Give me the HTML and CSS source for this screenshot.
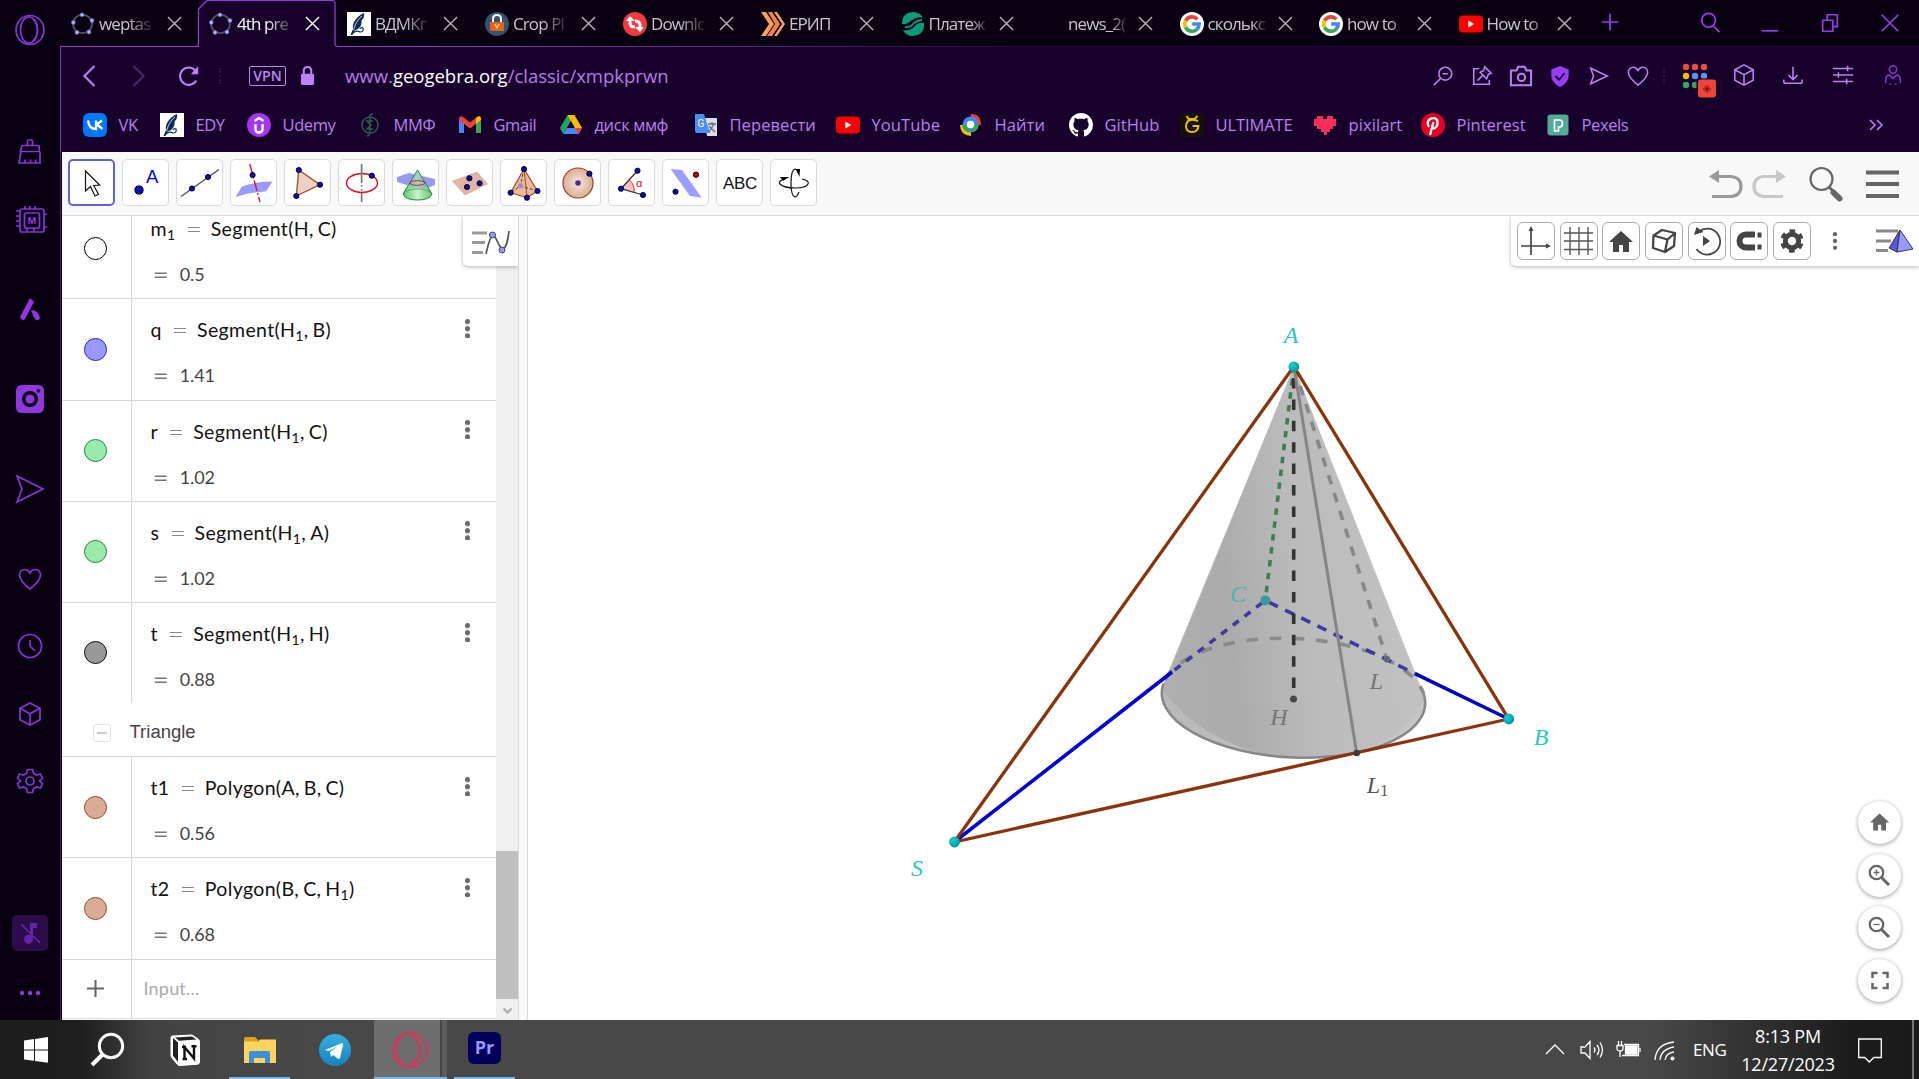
FILE: index.html
```html
<!DOCTYPE html>
<html lang="en">
<head>
<meta charset="utf-8">
<title>4th pre</title>
<link rel="stylesheet" href="styles.css">
</head>
<body>
<svg class="defs" width="0" height="0">
  <defs>
    <g id="x"><path d="M1 1L15 15M15 1L1 15"/></g>
    <g id="ggb"><ellipse cx="11.500" cy="12" rx="9.500" ry="9.200" fill="none" stroke="#504f56" stroke-width="2"/><g fill="#b0aef5" stroke="#7775cc" stroke-width=".5"><circle cx="11" cy="2.800" r="1.900"/><circle cx="21" cy="8.500" r="1.900"/><circle cx="18" cy="20" r="1.900"/><circle cx="6" cy="20.500" r="1.900"/><circle cx="2.300" cy="10.500" r="1.900"/></g></g>
    <g id="feather"><path fill="#fff" d="M0 0h24v24H0z"/><path fill="#0c2b57" d="M17 1C9 5 5 11 6 17L3.500 23h2l2-4.500C13 17 15 13 14.500 8.500 17 6 17.500 4 17 1z"/><path stroke="#fff" stroke-width=".8" fill="none" d="M15 4c-5 4-7 9-8.500 14"/><path stroke="#0c2b57" stroke-width="1.200" fill="none" d="M6 21q3-3 7-1 4 0 3-4-2-1-3 1"/></g>
    <g id="google"><circle cx="12" cy="12" r="12" fill="#fff"/><g fill="none" stroke-width="3.600"><path stroke="#ea4335" d="M17.400 7.200A7.300 7.300 0 0 0 5.600 8.700"/><path stroke="#fbbc05" d="M5.600 8.600a7.300 7.300 0 0 0 0 6.800"/><path stroke="#34a853" d="M5.600 15.300a7.300 7.300 0 0 0 11.500 1.900"/><path stroke="#4285f4" d="M12.200 12h6.900a7 7 0 0 1-2.200 5.300"/></g></g>
    <g id="yt"><rect x="0" y="3.500" width="24" height="17" rx="4" fill="#f00"/><path fill="#fff" d="M9.300 8.600v6.800l6-3.400z"/></g>
    <g id="cube"><path d="M12 1l10 5.300v11.400L12 23 2 17.700V6.300zM2 6.300l10 5.400 10-5.400M12 11.700V23"/></g>
    <g id="heart"><path d="M12 22C7 18 1.500 13.500 1.500 8.200 1.500 4.500 4 2.500 6.800 2.500 9.300 2.500 11 4 12 6c1-2 2.700-3.500 5.200-3.500 2.800 0 5.300 2 5.300 5.700C22.500 13.500 17 18 12 22z"/></g>
    <g id="home"><path d="M12 2L0 13h4v10h6v-7h4v7h6V13h4z"/></g>
    <g id="d" fill="#0a0abf" stroke="#000" stroke-width=".9"><circle r="2.600"/></g>
    <linearGradient id="cone" x1="1165" x2="1425" y1="650" y2="620" gradientUnits="userSpaceOnUse"><stop offset="0" stop-color="#adadad"/><stop offset=".25" stop-color="#a8a8a8"/><stop offset=".55" stop-color="#bababa"/><stop offset="1" stop-color="#c2c2c2"/></linearGradient>
    <linearGradient id="base" x1="1165" x2="1425" y1="0" y2="0" gradientUnits="userSpaceOnUse"><stop offset="0" stop-color="#b8b8b8"/><stop offset=".4" stop-color="#c0c0c0"/><stop offset="1" stop-color="#c6c6c6"/></linearGradient>
    <radialGradient id="pt" cx=".35" cy=".35" r=".7"><stop offset="0" stop-color="#0fd0d0"/><stop offset="1" stop-color="#009a9a"/></radialGradient>
    <radialGradient id="sph"><stop offset="0" stop-color="#f8e6de"/><stop offset="1" stop-color="#dcae96"/></radialGradient>
    <linearGradient id="grn"><stop offset="0" stop-color="#5fc46a"/><stop offset=".5" stop-color="#c9f2cc"/><stop offset="1" stop-color="#62c96c"/></linearGradient>
    <linearGradient id="tg" x2="0" y2="1"><stop offset="0" stop-color="#37aee2"/><stop offset="1" stop-color="#1583bd"/></linearGradient>
  </defs>
</svg>
<div class="screen">
<div class="window">
<nav class="side">
  <svg viewBox="0 0 36 36"><g><ellipse cx="18" cy="18" rx="14" ry="14.500"/><ellipse cx="17" cy="18" rx="8.500" ry="13"/><path d="M21 7c6 5 6 17 0 22"/></g></svg>
  <div class="g1">
    <svg viewBox="0 0 36 36"><path d="M15.500 11.500V7q0-1 1-1h3q1 0 1 1v4.500M8.500 17.500l1-5q.300-1 1.300-1h15.400q1 0 1 1v5zM9 17.500L7 29h21v-11.500M13 29v-3.500M18.500 29v-3.500M23.500 29v-3.500"/></svg>
    <svg viewBox="0 0 36 36"><rect x="8" y="7" width="24" height="23" rx="2"/><rect x="12.500" y="11" width="15" height="15" rx="2"/><path d="M13 7V4M18 7V4M23 7V4M8 9H4M8 14H4M8 19H4M8 24H4M35 12h-3M35 25h-3M15 26v4M22 26v4"/><text x="20" y="22" class="chip">M</text></svg>
  </div>
  <div class="g2">
    <svg viewBox="0 0 36 36"><path class="f" d="M18 7l4 4-9 17q-3 3-5-2zM19 19q7 0 9 8-2 4-5 1-2-3-4-9z"/></svg>
    <svg viewBox="0 0 36 36"><path class="f" fill-rule="evenodd" d="M10 4h16q6 0 6 6v16q0 6-6 6H10q-6 0-6-6V10q0-6 6-6zm8 6a8 8 0 1 0 .01 0zm0 3.500a4.500 4.500 0 1 1-.01 0zM26.500 8a1.800 1.800 0 1 0 .01 0z"/></svg>
    <svg viewBox="0 0 36 36"><path d="M5 5l26 13L5 31l5-13z"/></svg>
  </div>
  <div class="g3">
    <svg viewBox="-6 -6 36 36"><use href="#heart"/></svg>
    <svg viewBox="0 0 36 36"><circle cx="18" cy="18" r="11.500"/><path d="M18 12v6l5 5"/></svg>
    <svg viewBox="-6 -6 36 36"><use href="#cube"/></svg>
    <svg viewBox="0 0 36 36"><circle cx="18" cy="18" r="4"/><path d="M15.500 6.500h5l1 4 3 1.500 4-1 2 4.300-3 2.700 3 2.700-2 4.300-4-1-3 1.500-1 4h-5l-1-4-3-1.500-4 1-2-4.300 3-2.700-3-2.700 2-4.300 4 1 3-1.500z"/></svg>
  </div>
  <svg class="mute" viewBox="0 0 36 36"><path class="f" d="M18 8h7v5h-4v11a4.500 4.500 0 1 1-3-4z"/><path d="M9 9l19 19"/></svg>
  <svg class="more" viewBox="0 0 36 36"><g class="f"><circle cx="10" cy="18" r="2.200"/><circle cx="18" cy="18" r="2.200"/><circle cx="26" cy="18" r="2.200"/></g></svg>
</nav>
<div class="main">
<header class="tabs">
  <div class="tab"><svg viewBox="0 0 24 24"><use href="#ggb"/></svg><span>weptas</span><svg class="cl" viewBox="0 0 16 16"><use href="#x"/></svg></div>
  <div class="tab on"><svg class="edge" viewBox="0 0 138 48"><path d="M-138 46.500H-3Q-.500 46.500-.500 43V9L8 .5H133q3 0 3 3V43q0 3.500 3 3.500"/></svg><svg viewBox="0 0 24 24"><use href="#ggb"/></svg><span>4th pre</span><svg class="cl" viewBox="0 0 16 16"><use href="#x"/></svg></div>
  <div class="tab"><svg viewBox="0 0 24 24"><use href="#feather"/></svg><span>ВДМКг</span><svg class="cl" viewBox="0 0 16 16"><use href="#x"/></svg></div>
  <div class="tab"><svg viewBox="0 0 24 24"><circle cx="12" cy="12" r="12" fill="#35536b"/><path d="M8 11V7q0-4 4-4t4 4v4" stroke="#fff" stroke-width="2" fill="none"/><rect x="5" y="10" width="14" height="9" rx="1" fill="#e5612b"/><path d="M10 12l2 4 2-4" stroke="#ffd23c" stroke-width="1.500" fill="none"/></svg><span>Crop Pl</span><svg class="cl" viewBox="0 0 16 16"><use href="#x"/></svg></div>
  <div class="tab"><svg viewBox="0 0 24 24"><circle cx="12" cy="12" r="12" fill="#f23a3f"/><g fill="none" stroke="#fff" stroke-width="3"><path d="M7 8v3q0 4 5 4M17 16v-3q0-4-5-4"/></g><path fill="#fff" d="M3 9l4-5 5 5zM21 15l-4 5-5-5z"/></svg><span>Downlc</span><svg class="cl" viewBox="0 0 16 16"><use href="#x"/></svg></div>
  <div class="tab w1"><svg viewBox="0 0 24 24"><path d="M0 0h5l8 12-8 12H0l8-12z" fill="#f6a060"/><path d="M7 0h4l8 12-8 12H6l8-12z" fill="#f2834e"/><path d="M13 0h3l8 12-8 12h-3l8-12z" fill="#f6a060"/></svg><span>ЕРИП</span><svg class="cl" viewBox="0 0 16 16"><use href="#x"/></svg></div>
  <div class="tab w1"><svg viewBox="0 0 24 24"><path fill="#0b9a80" d="M1 12Q1 0 13 0q7 1 9 6-6-2-11 2-5 5-10 4zM23 11q1 12-11 13-7 0-10-6 7 1 11-3 4-5 10-4z"/><path d="M4 15q5 1 9-4 4-3 8-3" stroke="#0b9a80" stroke-width="2" fill="none"/></svg><span>Платеж</span><svg class="cl" viewBox="0 0 16 16"><use href="#x"/></svg></div>
  <div class="tab w1"><svg viewBox="0 0 24 24"></svg><span>news_2(</span><svg class="cl" viewBox="0 0 16 16"><use href="#x"/></svg></div>
  <div class="tab w1"><svg viewBox="0 0 24 24"><use href="#google"/></svg><span>сколькс</span><svg class="cl" viewBox="0 0 16 16"><use href="#x"/></svg></div>
  <div class="tab w1"><svg viewBox="0 0 24 24"><use href="#google"/></svg><span>how to</span><svg class="cl" viewBox="0 0 16 16"><use href="#x"/></svg></div>
  <div class="tab w1"><svg viewBox="0 0 24 24"><use href="#yt"/></svg><span>How to</span><svg class="cl" viewBox="0 0 16 16"><use href="#x"/></svg></div>
  <svg class="ctl plus" viewBox="0 0 24 24"><path d="M12 3v18M3 12h18"/></svg>
  <div class="wctl">
    <svg class="ctl" viewBox="0 0 24 24"><circle cx="10.500" cy="9" r="7.500"/><path d="M15.500 15l7 7"/></svg>
    <svg class="ctl" viewBox="0 0 24 24"><path d="M3 20.500h18"/></svg>
    <svg class="ctl" viewBox="0 0 24 24"><path d="M4 9h11v12H4zM9 9V3h11v13h-5"/></svg>
    <svg class="ctl" viewBox="0 0 24 24"><path d="M3 3l18 18M21 3L3 21"/></svg>
  </div>
</header>
<div class="addr">
  <div class="nav">
    <svg viewBox="0 0 24 24"><path d="M18 1L7 12l11 11"/></svg>
    <svg class="dim" viewBox="0 0 24 24"><path d="M6 1l11 11L6 23"/></svg>
    <svg viewBox="0 0 24 24"><path d="M20 17a9.500 9.500 0 1 1-1-11"/><path class="f" d="M22 1v9h-8z"/></svg>
  </div>
  <i class="sep"></i>
  <span class="vpn">VPN</span>
  <svg class="lock" viewBox="0 0 16 22"><path d="M4 10V6q0-4 4-4t4 4v4"/><rect class="f" x="1" y="9" width="14" height="12" rx="1.500"/></svg>
  <span class="url">www.<b>geogebra.org</b>/classic/xmpkprwn</span>
  <div class="acts">
    <svg viewBox="0 0 24 24"><circle cx="14.500" cy="9.500" r="7"/><path d="M9.500 14.500L2 22M11.500 9.500h6"/></svg>
    <svg viewBox="0 0 24 24"><path d="M9 4H3v17h17v-5M15 2l7 7-3 1-2 5-7-7 4-2zM12.500 11.500L7 17"/></svg>
    <svg viewBox="0 0 24 24" class="bold"><path d="M1 6h6l2-4h7l2 4h5v16H1z"/><circle cx="12.500" cy="13.500" r="4"/></svg>
    <svg viewBox="0 0 24 24"><path fill="#9a3cf5" stroke="none" d="M12 1l9.500 4v7q0 7-9.500 12Q2.500 19 2.500 12V5z"/><path stroke="#170029" stroke-width="2" d="M7 12l4 4 6-7"/></svg>
    <svg viewBox="0 0 24 24"><path d="M3 3.500L21 12 3 20.500 6 12z"/></svg>
    <svg viewBox="0 0 24 24"><use href="#heart"/></svg>
  </div>
  <i class="sep s2"></i>
  <div class="exts">
    <svg class="dots" viewBox="0 0 24 24"><g fill="#ea4d45"><circle cx="3" cy="3" r="3.200"/><circle cx="12" cy="3" r="3.200"/><circle cx="21" cy="3" r="3.200"/></g><circle cx="3" cy="12" r="3.200" fill="#fbbc05"/><g fill="#5c96f2"><circle cx="12" cy="12" r="3.200"/><circle cx="21" cy="12" r="3.200"/></g><g fill="#39a55a"><circle cx="3" cy="21" r="3.200"/><circle cx="12" cy="21" r="3.200"/></g><rect x="13.500" y="14.500" width="20" height="20" rx="3" fill="#170029"/><rect x="15" y="15.500" width="18" height="18" rx="3" fill="#f04438"/><path stroke="#6d1410" stroke-width="1" d="M24 21v8M20 25h8M21.500 22.500l5 5M26.500 22.500l-5 5"/></svg>
    <svg viewBox="0 0 24 24"><use href="#cube"/></svg>
    <svg viewBox="0 0 24 24"><path d="M12 3v14M7 12l5 5 5-5M2 17v2q0 2 2 2h16q2 0 2-2v-2"/></svg>
    <svg viewBox="0 0 24 24"><path d="M1 5h22M1 12h22M1 19h22M17 2v6M7 9v6M16 16v6"/></svg>
    <svg class="dimp" viewBox="0 0 24 24"><circle cx="12" cy="6" r="4"/><path d="M4 21v-3q0-6 4-6l4 4 4-4q4 0 4 6v3M8 22h2M14 22h2"/></svg>
  </div>
</div>
<div class="marks">
  <div><svg viewBox="0 0 24 24"><rect width="24" height="24" rx="6" fill="#07f"/><path d="M5 7.500q1 8.500 8 8.500v-8.500M13 12l6-4.500M14 11.500l5.500 4.500" fill="none" stroke="#fff" stroke-width="2.300"/></svg><span>VK</span></div>
  <div><svg viewBox="0 0 24 24"><use href="#feather"/></svg><span>EDY</span></div>
  <div><svg viewBox="0 0 24 24"><circle cx="12" cy="12" r="12" fill="#a435f0"/><path d="M8.500 11v5q0 3.500 3.500 3.500t3.500-3.500v-5M7.500 8l4.500-3 4.500 3" fill="none" stroke="#fff" stroke-width="2.400"/></svg><span>Udemy</span></div>
  <div><svg viewBox="0 0 24 24"><g fill="none" stroke="#2f5a50" stroke-width="1.500"><circle cx="12" cy="12" r="8"/><path d="M15 1q-4 0-3 5v12q0 5-3 5M15 8H9l4 4-4 4h6"/></g></svg><span>ММФ</span></div>
  <div><svg viewBox="0 0 24 24"><path d="M1 20V6l5 4v10z" fill="#4285f4"/><path d="M18 20V10l5-4v14z" fill="#34a853"/><path d="M1 6q0-4 4-2l7 5.500L19 4q4-2 4 2v1l-11 8.500L1 7z" fill="#ea4335"/><path d="M18 5l1-1q4-2 4 2v1l-5 4z" fill="#fbbc05"/></svg><span>Gmail</span></div>
  <div><svg viewBox="0 0 24 24"><path d="M8.500 2h7L8 15l-4 6-3-6z" fill="#1da462"/><path d="M8.500 2h7L23 15h-7.500z" fill="#fbbc05"/><path d="M8 15h15l-3.500 6H4z" fill="#4688f4"/><path d="M16 15h7l-3.500 6z" fill="#ea4335"/><path d="M12 8l3.800 7H8z" fill="#170029"/></svg><span>диск ммф</span></div>
  <div><svg viewBox="0 0 24 24"><path d="M10 5h12q1 0 1 1v17H13z" fill="#dce0e6"/><path d="M1 1h9l6 19H3q-2 0-2-2z" fill="#4a8df5"/><path d="M14 11h8M18 9v2M15 19l5-8M15 13l6 6" stroke="#66707c" stroke-width="1.400"/><text x="3.500" y="14" font-size="10" fill="#fff" font-family="Roboto,sans-serif">G</text></svg><span class="wide">Перевести</span></div>
  <div><svg viewBox="0 0 24 24"><use href="#yt"/></svg><span class="wide">YouTube</span></div>
  <div><svg viewBox="0 0 24 24"><path d="M12 1q10 0 10 11h-6L12 6z" fill="#ea4335"/><path d="M1 12h6l5 6v5Q1 22 1 12z" fill="#fbbc05"/><circle cx="11.500" cy="11.500" r="8" fill="#4285f4"/><path d="M12 19q8-1 8-8l-7 0z" fill="#34a853"/><path d="M11 19q-8-1-8-8l6 1z" fill="#34a853"/><circle cx="11.500" cy="11.500" r="3.800" fill="#fff"/></svg><span class="wide">Найти</span></div>
  <div><svg viewBox="0 0 16 16"><path fill="#fff" d="M8 0C3.580 0 0 3.580 0 8c0 3.540 2.290 6.530 5.470 7.590.4.070.55-.17.55-.38 0-.19-.01-.82-.01-1.490-2.010.37-2.530-.49-2.690-.94-.09-.23-.48-.94-.82-1.130-.28-.15-.68-.52-.01-.53.63-.01 1.080.58 1.230.82.720 1.210 1.870.87 2.330.66.070-.52.280-.87.510-1.070-1.780-.2-3.640-.89-3.640-3.950 0-.87.310-1.590.82-2.150-.08-.2-.36-1.020.08-2.120 0 0 .67-.21 2.200.82.640-.18 1.320-.27 2-.27s1.360.09 2 .27c1.530-1.040 2.200-.82 2.200-.82.440 1.100.16 1.920.08 2.120.51.560.82 1.270.82 2.150 0 3.070-1.870 3.750-3.650 3.950.29.25.54.73.54 1.480 0 1.070-.01 1.930-.01 2.200 0 .21.150.46.550.38A8.010 8.010 0 0 0 16 8c0-4.420-3.580-8-8-8z"/></svg><span class="wide">GitHub</span></div>
  <div><svg viewBox="0 0 24 24"><rect width="24" height="24" rx="2" fill="#15120d"/><path d="M6.500 3l2 3h6l3-3M18 8q-11-4-12 5 0 6 6 6t6.500-6h-6" fill="none" stroke="#f2b90c" stroke-width="1.900"/></svg><span class="ul">ULTIMATE</span></div>
  <div><svg viewBox="0 0 24 24"><path fill="#f72d5a" d="M4 3h6v3h4V3h6v3h3v7h-3v3h-3v3h-3v3h-3v-3H8v-3H4v-3H1V6h3z"/></svg><span class="wide">pixilart</span></div>
  <div><svg viewBox="0 0 24 24"><circle cx="12" cy="12" r="12" fill="#e60023"/><path d="M8 14q-3-5 1-8 5-2 7 1 2 5-2 8-2 1-3-1M12.500 9L9 22" fill="none" stroke="#fff" stroke-width="2.300"/></svg><span class="ul3">Pinterest</span></div>
  <div><svg viewBox="0 0 24 24"><rect x="1.500" y="1.500" width="21" height="21" rx="3" fill="#52ab99"/><path d="M8.500 18V7h5q3 0 3 3.500t-3 3.500h-1v4z" fill="none" stroke="#fff" stroke-width="1.700"/></svg><span>Pexels</span></div>
  <svg class="chev" viewBox="0 0 16 16"><path d="M2 3l5 5-5 5M9 3l5 5-5 5"/></svg>
</div>
<div class="page">
  <div class="tools">
    <button class="sel"><svg viewBox="0 0 47 47"><path d="M17.500 12v20l5-4.500 4.500 9.500 3.500-1.800-4.800-8.700 6-.5z" fill="#fff" stroke="#111" stroke-width="1.200"/></svg></button>
    <button><svg viewBox="0 0 47 47"><circle cx="17" cy="31" r="4.100" fill="#0a0abf" stroke="#000"/><text x="24" y="24" font-size="18.500" fill="#00d">A</text></svg></button>
    <button><svg viewBox="0 0 47 47"><path d="M5 37.500L43 10.500" stroke="#555" stroke-width="1.500"/><use href="#d" x="16" y="29.500"/><use href="#d" x="32" y="18"/></svg></button>
    <button><svg viewBox="0 0 47 47"><path class="soft" d="M5.500 38L12 27.500q13-5 30.500-5L36 32.500q-15 .5-30.500 5.500z" fill="#9a99ff"/><path d="M19.800 5L30 43" stroke="#e01030" stroke-width="1.400" stroke-dasharray="11 2 2 2 11 2 2 2 20"/><use href="#d" x="22.600" y="16"/></svg></button>
    <button><svg viewBox="0 0 47 47"><path d="M14.800 11L36 25.700 12.300 37z" fill="#ebd0c5" stroke="#a34b20" stroke-width="1.300"/><use href="#d" x="14.800" y="11"/><use href="#d" x="36" y="25.700"/><use href="#d" x="12.300" y="37"/></svg></button>
    <button><svg viewBox="0 0 47 47"><ellipse cx="24" cy="24" rx="15.500" ry="9.500" fill="none" stroke="#e01020" stroke-width="1.400"/><path d="M23.600 5v19M23.600 26v1.500M23.600 30v1.500M23.600 34v9" stroke="#777" stroke-width="1.700"/><use href="#d" x="33.800" y="16.700"/></svg></button>
    <button><svg viewBox="0 0 47 47"><path class="soft" d="M5 18l12-4 26 6v6l-12 5-26-8z" fill="#9a99f0"/><path d="M25.500 11L40 35q-2 6-14.500 6T11 35z" fill="url(#grn)" stroke="#228b3a"/><path d="M17.500 24l-1 2.500 5 3h11l3-3L30 18.500l-4-7-6 9z" fill="#6f8fc0" opacity=".35"/><ellipse cx="25.500" cy="24" rx="7.500" ry="2.300" fill="none" stroke="#c22"/><path d="M11 35q4-5 14.500-5T40 35" fill="none" stroke="#228b3a" stroke-width=".6"/></svg></button>
    <button><svg viewBox="0 0 47 47"><path class="soft" d="M5.800 22L31 12.500 42 25 19 36.500z" fill="#dfb5a3"/><use href="#d" x="23.400" y="19.300"/><use href="#d" x="33.600" y="24.300"/><use href="#d" x="21" y="28"/></svg></button>
    <button><svg viewBox="0 0 47 47"><path d="M24 10L10.600 33.700 27 38.700 37.500 32z" fill="#eab79c" stroke="#a34b20" stroke-width="1.200"/><path d="M24 10l3 28" stroke="#a34b20"/><path d="M24 10l-3.600 17-10 6.700M20.400 27l17 5" stroke="#333" stroke-width=".9" stroke-dasharray="3 2" fill="none"/><circle cx="20.400" cy="27" r="2.500" fill="#a58fb0"/><use href="#d" x="24" y="10"/><use href="#d" x="10.600" y="33.700"/><use href="#d" x="37.500" y="32"/><use href="#d" x="27" y="38.700"/></svg></button>
    <button><svg viewBox="0 0 47 47"><circle cx="24" cy="24" r="15" fill="url(#sph)" stroke="#8f4420" stroke-width="1.200"/><circle cx="24" cy="24" r="2.800" fill="#4b2f96"/><use href="#d" x="35.400" y="14.700"/></svg></button>
    <button><svg viewBox="0 0 47 47"><path d="M13 29.700l8-9q6 5 5 12z" fill="#f7c4c9"/><path d="M21 20.700q6 5 5 12.500" fill="none" stroke="#d22"/><path d="M29.500 11.700L13 29.700 35 36" fill="none" stroke="#333" stroke-width="1.300"/><text x="28" y="28" font-size="11" fill="#e01020">α</text><use href="#d" x="29.500" y="11.700"/><use href="#d" x="13" y="29.700"/><use href="#d" x="35" y="36"/></svg></button>
    <button><svg viewBox="0 0 47 47"><path class="soft" d="M8.600 10L20 11l19.500 27.500L28 37z" fill="#9d9cff"/><use href="#d" x="13.500" y="32.700"/><circle cx="34" cy="15.700" r="2.700" fill="#c00010" stroke="#300"/></svg></button>
    <button><svg viewBox="0 0 47 47"><text x="24" y="30" font-size="17" text-anchor="middle" fill="#111" letter-spacing="-.3">ABC</text></svg></button>
    <button><svg viewBox="0 0 47 47"><g fill="none" stroke="#111" stroke-width="1.200"><path d="M12 21q-4 2-2 4 4 4 15 4t13-4q2-3-6-5"/><path d="M28 14q-1-4-3-4-4 1-4 14t4 14q2 0 4-5"/></g><path d="M26 10l4 0-.5 8zM10 18h9l-6 4z" fill="#000"/></svg></button>
    <div class="right">
      <svg viewBox="0 0 34 30" width="34"><path d="M3 27.500h19q10-1 10-10 0-9-10-10H9" fill="none" stroke="#9a9a9a" stroke-width="3.200"/><path fill="#9a9a9a" d="M0 7.500L10 1v13z"/></svg>
      <svg viewBox="0 0 34 30" width="34"><path d="M31 27.500H12q-10-1-10-10 0-9 10-10h13" fill="none" stroke="#c8c8c8" stroke-width="3.200"/><path fill="#c8c8c8" d="M34 7.500L24 1v13z"/></svg>
      <svg viewBox="0 0 34 36" width="34" class="big"><circle cx="12.500" cy="13" r="11" fill="none" stroke="#666" stroke-width="2.200"/><path d="M20 21l4 4" stroke="#666" stroke-width="3"/><path d="M24.500 26.500l6 6" stroke="#666" stroke-width="6" stroke-linecap="round"/></svg>
      <svg viewBox="0 0 34 30" width="34"><path d="M0 3.500h33M0 15h33M0 27h33" stroke="#666" stroke-width="4"/></svg>
    </div>
  </div>
  <div class="work">
    <div class="alg">
      <div class="list">
        <div class="row"><div class="m"><i style="background:#fff;border-color:#000"></i></div><div class="e"><p>m<sub>1</sub><s>=</s>Segment(H,<u></u>C)</p><p class="v"><s>=</s>0.5</p></div></div>
        <div class="row"><div class="m"><i style="background:#9999ff;border-color:#2222dd"></i></div><div class="e"><p>q<s>=</s>Segment(H<sub>1</sub>,<u></u>B)</p><p class="v"><s>=</s>1.41</p></div><b></b></div>
        <div class="row"><div class="m"><i style="background:#99eaac;border-color:#22883a"></i></div><div class="e"><p>r<s>=</s>Segment(H<sub>1</sub>,<u></u>C)</p><p class="v"><s>=</s>1.02</p></div><b></b></div>
        <div class="row"><div class="m"><i style="background:#99eaac;border-color:#22883a"></i></div><div class="e"><p>s<s>=</s>Segment(H<sub>1</sub>,<u></u>A)</p><p class="v"><s>=</s>1.02</p></div><b></b></div>
        <div class="row nb"><div class="m"><i style="background:#999;border-color:#111"></i></div><div class="e"><p>t<s>=</s>Segment(H<sub>1</sub>,<u></u>H)</p><p class="v"><s>=</s>0.88</p></div><b></b></div>
        <div class="group"><span class="minus"></span>Triangle</div>
        <div class="row"><div class="m"><i style="background:#d8ac97;border-color:#9c4a22"></i></div><div class="e"><p>t1<s>=</s>Polygon(A,<u></u>B,<u></u>C)</p><p class="v"><s>=</s>0.56</p></div><b></b></div>
        <div class="row"><div class="m"><i style="background:#d8ac97;border-color:#9c4a22"></i></div><div class="e"><p>t2<s>=</s>Polygon(B,<u></u>C,<u></u>H<sub>1</sub>)</p><p class="v"><s>=</s>0.68</p></div><b></b></div>
        <div class="row input"><div class="m"><svg viewBox="0 0 18 18" width="17"><path d="M9 0v18M0 9h18" stroke="#666" stroke-width="2.200"/></svg></div><div class="e">Input...</div></div>
      </div>
      <div class="scroll"><span></span><svg viewBox="0 0 22 20"><path d="M7.500 9l4 4 4-4" fill="none" stroke="#aaa" stroke-width="2.200"/></svg></div>
      <div class="sb"><svg viewBox="0 0 40 28"><path d="M1 5h15M1 14.500h13M1 24.500h11" stroke="#999" stroke-width="2.800"/><path d="M15 26Q19 8 22 7c4 2 6 14 10 14 4-2 5-10 6-18" fill="none" stroke="#555" stroke-width="1.700"/><g fill="#9a99e8" stroke="#447"><circle cx="21.500" cy="7" r="3"/><circle cx="31" cy="22" r="3"/></g></svg></div>
    </div>
    <div class="gap"></div>
    <div class="view">
      <svg class="fig" viewBox="528 216 1391 804" fill="none">
        <path d="M1293.900 366.400L1163.500 683.500A131.800 59.500 2.720 1 0 1423.500 693.400Z" fill="url(#base)"/>
        <path d="M1293.900 366.400L1162.500 690Q1210 752 1298 759Q1400 756 1424.500 700Z" fill="url(#cone)" opacity=".85"/>
        <g stroke-width="3.600">
          <path d="M1163.500 683.500A131.800 59.500 2.720 0 1 1423.500 693.400" stroke="#8a8a8a" stroke-dasharray="11.500 11.800" stroke-dashoffset="-4"/>
          <path d="M1265.300 600.400L1168 675" stroke="#403a9e" stroke-dasharray="7.500 7.200" stroke-dashoffset="-4"/>
          <path d="M1265.300 600.400L1418 675" stroke="#403a9e" stroke-dasharray="10 8" stroke-dashoffset="-4"/>
          <path d="M1293.900 366.400L1265.300 600.400" stroke="#3c8050" stroke-dasharray="6.500 6.500"/>
          <path d="M1293.900 366.400L1386.900 659.300" stroke="#878787" stroke-dasharray="9.500 9.200" stroke-dashoffset="-2"/>
          <path d="M1293.700 378V699" stroke="#333" stroke-dasharray="10.500 10.900"/>
          <path d="M1172 672L954.300 842" stroke="#0000d8"/>
          <path d="M1415.500 673.800L1508.600 719" stroke="#0000c4"/>
        </g>
        <path d="M1163.500 683.500A131.800 59.500 2.720 1 0 1423.500 693.400" stroke="#888" stroke-width="2.600"/>
        <path d="M1293.900 366.400L1356.700 753" stroke="#858585" stroke-width="3"/>
        <g stroke="#8b340c" stroke-width="3.300"><path d="M1293.900 366.400L954.300 842L1508.600 719Z"/></g>
        <circle cx="1265.300" cy="600.400" r="5" fill="#3b9a9c"/>
        <g fill="url(#pt)"><circle cx="1293.900" cy="366.800" r="5.400"/><circle cx="954.500" cy="842" r="5.400"/><circle cx="1508.800" cy="719" r="5.400"/></g>
        <circle cx="1293.500" cy="699" r="3.500" fill="#4a4a4a"/><circle cx="1386.900" cy="659.300" r="3.300" fill="#646478"/><circle cx="1356.700" cy="753" r="3.300" fill="#3c3c3c"/>
        <g class="lb" text-anchor="middle">
          <g fill="#25c9c6"><text x="1291" y="343">A</text><text x="917" y="876">S</text><text x="1541" y="745">B</text></g>
          <text x="1238" y="602" fill="#48b6b4">C</text>
          <g fill="#757575"><text x="1376.500" y="688.500">L</text><text x="1279" y="724.500">H</text></g>
          <text x="1377.500" y="792.500" fill="#555">L<tspan class="sm" dy="3">1</tspan></text>
        </g>
      </svg>
      <div class="sb3">
        <button><svg viewBox="0 0 38 38"><path d="M14 33V6M4 24h28" stroke="#444" stroke-width="1.700"/><path d="M14 4l2.500 5h-5zM34 24l-5-2.500v5z" fill="#444"/></svg></button>
        <button><svg viewBox="0 0 38 38"><path d="M10 5v28M19 5v28M28 5v28M4 11h29M4 19h29M4 27.500h29" stroke="#555" stroke-width="1.400"/></svg></button>
        <button><svg viewBox="-7 -7 38 38"><use href="#home" fill="#444"/></svg></button>
        <button><svg viewBox="0 0 38 38"><path d="M8.500 13.500L17 8l13 3-7.500 6.500zM8.500 13.500L8 26l12 4 9-6 1-13M22.500 17.500L20 30" fill="none" stroke="#444" stroke-width="2.300" stroke-linejoin="round"/></svg></button>
        <button><svg viewBox="0 0 38 38"><path d="M11 9.500a13 13 0 1 1-2.500 17.500" fill="none" stroke="#444" stroke-width="1.800"/><path d="M6 13l2.500-8 7 5zM15 14v10l7-5z" fill="#444"/></svg></button>
        <button><svg viewBox="0 0 38 38"><path d="M25 12.500H16a6.500 6.500 0 0 0 0 13h9" fill="none" stroke="#444" stroke-width="6"/><path d="M27.500 10.500h4v5h-4zM27.500 22.500h4v5h-4z" fill="#444"/></svg></button>
        <button><svg viewBox="0 0 38 38"><circle cx="19" cy="19" r="6.700" fill="none" stroke="#444" stroke-width="5"/><circle cx="19" cy="19" r="9.500" fill="none" stroke="#444" stroke-width="4.500" stroke-dasharray="5.200 4.750" stroke-dashoffset="2.600" transform="rotate(-30 19 19)"/></svg></button>
        <svg class="kb" viewBox="0 0 10 20" width="8"><g fill="#666"><circle cx="5" cy="1.500" r="2.700"/><circle cx="5" cy="10" r="2.700"/><circle cx="5" cy="18.500" r="2.700"/></g></svg>
        <svg class="pyr" viewBox="0 0 38 26" width="38"><path d="M0 3h22M0 13h15M0 22.500h12" stroke="#888" stroke-width="2.800"/><path d="M24 2L13 20l8 4z" fill="#5a58d8" stroke="#334"/><path d="M24 2l-3 22 16-3z" fill="#9a99ff" stroke="#335"/></svg>
      </div>
      <div class="zoomb">
        <button><svg viewBox="-9 -9.500 43 43"><use href="#home" fill="#666" transform="translate(3 1.500) scale(.8)"/></svg></button>
        <button><svg viewBox="0 0 43 43"><circle cx="18.500" cy="18.500" r="6.700"/><path d="M23 23l8 8" stroke-width="3"/><path d="M15.500 18.500h6M18.500 15.500v6" stroke-width="1.300"/></svg></button>
        <button><svg viewBox="0 0 43 43"><circle cx="18.500" cy="18.500" r="6.700"/><path d="M23 23l8 8" stroke-width="3"/><path d="M15.500 18.500h6" stroke-width="1.300"/></svg></button>
        <button><svg viewBox="0 0 43 43"><path d="M14.500 19v-5h5M24.500 14h5v5M29.500 24v5h-5M19.500 29h-5v-5" stroke-width="2.500"/></svg></button>
      </div>
    </div>
  </div>
</div>
</div>
</div>
<footer class="task">
  <div class="ap"><svg viewBox="0 0 36 36"><path fill="#fff" d="M6 8.500l10-1.400v10.400H6zM17 7l13-2v12.500H17zM6 18.500h10v10.300L6 27.400zM17 18.500h13v12.300L17 29z"/></svg></div>
  <div class="ap"><svg viewBox="0 0 36 36"><circle cx="19" cy="14" r="11.700" fill="none" stroke="#fff" stroke-width="3"/><path d="M10.500 22.500L0 33" stroke="#fff" stroke-width="4"/></svg></div>
  <div class="ap"><svg viewBox="0 0 36 36"><path d="M5 4l20-1 6 4q1.500 1 1.500 3v20q0 2-2 2.200L13 33.500q-2 0-3-1.500l-5-6q-1-1-1-3V6q0-2 1-2z" fill="#fff" stroke="#fff"/><path d="M6 6l5 4.500v19.500l-5-6.500zM8 5.500l17-1 4.500 3L12 8.800z" fill="#222"/><path d="M13 11l18-1v20l-18 1.200z" fill="#fff"/><path d="M17.500 26.500V15l9.500 11.500V14M15 15h4M24.500 14.200h5M15.500 27h4.500" stroke="#111" stroke-width="2.400" fill="none"/></svg></div>
  <div class="ap run"><svg viewBox="0 0 36 36"><path d="M2 7q0-2 2-2h9l3 3v3H2z" fill="#dda017"/><path d="M2 9.500h14l2-2h16V31H2z" fill="#ffd45e"/><path d="M7 31V21q0-2 2-2h17q2 0 2 2v10h-5v-5H12v5z" fill="#3d8fdb"/></svg></div>
  <div class="ap"><svg viewBox="0 0 36 36"><circle cx="18" cy="18" r="16" fill="url(#tg)"/><path fill="#fff" d="M8 18l17-7q1.500 0 1 2l-3 13q-1 2-3 0l-4-3-2 2-1-5 8-6-9 5z"/></svg></div>
  <div class="ap run act"><svg viewBox="0 0 36 36"><g fill="none" stroke="#e0305c" stroke-width="1.700"><circle cx="18" cy="18" r="17"/><ellipse cx="16" cy="18" rx="11.500" ry="16.500"/><path d="M20 4q8 4 8 14t-8 14"/></g></svg></div>
  <div class="ap run pr"><span>Pr</span></div>
  <div class="tray">
    <svg viewBox="0 0 24 24"><path d="M3 16l9-9 9 9"/></svg>
    <svg viewBox="0 0 24 24"><path d="M1 9h4l5-5.500v17L5 15H1zM14 9.500q2 2.500 0 5M17 7q4 5 0 10M20 4.500q5 7.500 0 15"/></svg>
    <svg viewBox="0 0 24 24"><path d="M8 6.500h14.500v11H6M1 7.500h6v3q0 2.500-3 2.500t-3-2.500zM2.500 7.500V3M5.500 7.500V3M4 13v6"/><path d="M9.500 8h11.500v8H9.500z" fill="#fff"/><path d="M24 10v4"/></svg>
    <svg viewBox="0 0 24 24"><path d="M2 22Q3 6 21 4M7 22Q8 11 21 9M12 22q1-7 9-8"/><circle cx="19.500" cy="20.500" r="2" fill="#fff" stroke="none"/></svg>
    <span class="lang">ENG</span>
    <div class="clock"><span>8:13 PM</span><span>12/27/2023</span></div>
    <svg class="note" viewBox="0 0 24 26"><path d="M.700 1h22.600v18.500h-7.500l-4.500 4.500-4.500-4.500H.700z"/></svg>
    <i></i>
  </div>
</footer>
</div>
</body>
</html>
```
FILE: styles.css
```css
* { box-sizing: border-box; }
body { margin: 0; font-family: "Open Sans", "Noto Sans", sans-serif; background: #0a0014; }
.defs { position: absolute; }
svg { display: block; flex: none; overflow: visible; }
button { padding: 0; margin: 0; background: #fff; display: block; flex: none; }
p { margin: 0; }
.screen { width: 1919px; height: 1079px; display: flex; flex-direction: column; overflow: hidden; }
.window { display: flex; height: 1020px; }

/* Browser sidebar */
.side { width: 60px; height: 1020px; background: #090011; display: flex; flex-direction: column; align-items: center; padding-top: 11.5px; flex: none; }
.side svg { width: 36px; height: 36px; fill: none; stroke: #8436d6; stroke-width: 1.7; }
.side .f { fill: #8f38e0; stroke: none; }
.side .chip { fill: #8f38e0; stroke: none; font: bold 9px Inter, sans-serif; text-anchor: middle; }
.side div { display: flex; flex-direction: column; }
.g1 { margin-top: 86px; gap: 32px; }
.g2 { margin-top: 53px; gap: 54px; }
.g3 { margin-top: 54px; gap: 31.5px; }
.side .mute { margin-top: 115.5px; background: #2c0d4a; border-radius: 5px; stroke: #6424a8; }
.side .mute .f { fill: #6424a8; }
.side .more { margin-top: 24px; }

.main { width: 1859px; background: linear-gradient(#090011 46px, #7a3cb8 46px, #7a3cb8 152px, #43186e 153px) left / 1px 100% no-repeat, #170029; padding-left: 1px; display: flex; flex-direction: column; }

/* Tab strip */
.tabs { height: 47px; background: linear-gradient(90deg, #8a46cf 274px, #5b2b8c 620px, #250640 960px) bottom / 100% 1px no-repeat, #090011; display: flex; flex: none; }
.tab { width: 138px; height: 47px; display: flex; align-items: center; padding-left: 10px; color: #c9c4ce; font-size: 17px; position: relative; flex: none; }
.tab > svg { width: 24px; height: 24px; }
.tab span { width: 58px; margin-left: 4px; margin-right: 10px; white-space: nowrap; letter-spacing: -.9px; line-height: 26px; -webkit-mask-image: linear-gradient(90deg, #000 50%, transparent 100%); mask-image: linear-gradient(90deg, #000 50%, transparent 100%); }
.tab .cl { width: 15px; height: 15px; stroke: #b9b2c2; stroke-width: 1.5; fill: none; }
.tab.on { background: #170029; color: #fff; }
.tab.on .cl { stroke: #fff; }
.tab > .edge { position: absolute; left: 0; top: 0; width: 138px; height: 48px; fill: none; stroke: #8a46cf; stroke-width: 1.2; }
.tab.w1 { width: 139.500px; }
.tab.w1 span { margin-right: 12px; -webkit-mask-image: linear-gradient(90deg, #000 75%, transparent 105%); mask-image: linear-gradient(90deg, #000 75%, transparent 105%); }
.ctl { width: 22px; height: 22px; fill: none; stroke: #8f3fe8; stroke-width: 1.9; }
.plus { margin: 11px 0 0 11px; }
.wctl { margin: 12px 18px 0 auto; display: flex; gap: 38px; }

/* Address bar */
.addr { height: 57px; display: flex; align-items: center; flex: none; }
.addr svg { width: 22px; height: 22px; fill: none; stroke: #bd80f5; stroke-width: 1.7; }
.addr .f { fill: #bd80f5; stroke: none; }
.nav { display: flex; gap: 28px; margin-left: 17px; }
.nav svg { stroke-width: 2.300; }
.addr .dim { stroke: #47246a; }
.sep { width: 2px; height: 16px; margin-left: 19px; border-left: 2px dotted #2f1249; }
.vpn { width: 37px; height: 20px; border: 1.500px solid #bd80f5; border-radius: 2px; margin-left: 28px; color: #c285fb; font: 600 14px/17px "Open Sans", sans-serif; text-align: center; }
.addr .lock { width: 15px; height: 21px; margin: 0 30px 0 14px; stroke-width: 2.200; }
.url { color: #b37ce8; font-size: 18.500px; letter-spacing: 0; line-height: 26px; }
.url b { color: #fff; font-weight: 400; }
.acts { display: flex; gap: 17px; margin-left: auto; }
.addr .acts .bold { stroke-width: 2.200; }
.addr .s2 { margin-left: 14px; }
.exts { display: flex; gap: 27.500px; margin: 0 15px 0 18px; }
.addr .exts .dots { stroke: none; width: 24px; height: 24px; margin-right: -2px; }
.addr .exts svg:last-child { margin-left: 1px; }
.addr .dimp { stroke: #8436d6; }

/* Bookmarks */
.marks { height: 48px; padding: 0 0 7px 22px; display: grid; grid-template-columns: 77px 87px 111px 100px 101px 135px 142px 123px 110px 111px 133px 108px 125px 1fr 51px; align-items: center; color: #b980f0; font-size: 16.500px; flex: none; letter-spacing: -.4px; }
.marks div { display: flex; align-items: center; gap: 11.500px; white-space: nowrap; }
.marks span { position: relative; top: -.5px; }
.marks .ul { letter-spacing: -.1px; }
.marks .ul3 { letter-spacing: 0; }
.marks .wide { letter-spacing: .1px; }
.marks svg { width: 24px; height: 24px; }
.marks .chev { width: 16px; height: 16px; fill: none; stroke: #b980f0; stroke-width: 1.600; }

/* GeoGebra page */
.page { margin-left: 1px; background: #fff; height: 868px; display: flex; flex-direction: column; flex: none; }
.tools { height: 64px; background: #f8f8f8; border-bottom: 1.500px solid #dcdcdc; padding: 7px 19px 0 6px; display: flex; gap: 7px; font-family: "Liberation Sans", sans-serif; flex: none; }
.tools button { width: 47px; height: 47px; border: 1px solid #dadada; border-radius: 5px; }
.tools button svg { width: 47px; height: 47px; margin: -1px; }
.tools .sel { border: 2px solid #6560d8; }
.tools .sel svg { margin: -2px; }
.soft { filter: blur(.6px); }
.right { margin-left: auto; display: flex; height: 50px; align-items: center; }
.right svg + svg { margin-left: 9px; }
.right .big, .right svg.big + svg { margin-left: 23px; }
.work { display: flex; height: 804px; }
.alg { width: 457px; position: relative; display: flex; border-right: 1px solid #d8d8d8; flex: none; overflow: hidden; }
.list { width: 434px; height: 803px; display: flex; flex-direction: column; justify-content: flex-end; border-bottom: 1px solid #dcdcdc; }
.row { height: 101.300px; flex: none; display: flex; border-bottom: 1px solid #d8d8d8; position: relative; }
.m { width: 70px; border-right: 1px solid #d4d4d4; display: flex; align-items: center; justify-content: center; padding-right: 2px; flex: none; }
.m i { width: 23px; height: 23px; border: 1.500px solid; border-radius: 50%; }
.nb { border-bottom: 0; height: 99.500px; }
.e { flex: 1; padding: 19px 0 0 18.500px; font: 19.500px/24px Lato, sans-serif; color: #111; white-space: nowrap; letter-spacing: .35px; }
.e sub { font-size: 14px; line-height: 0; vertical-align: -4px; }
.e u { display: inline-block; width: 4px; }
.e s { display: inline-block; text-decoration: none; color: #888; font-size: 24px; font-weight: 300; line-height: 0; margin: 0 9.500px 0 11.500px; position: relative; top: 2px; transform: scaleX(1.2); }
.e .v { margin-top: 21px; color: #444; font-size: 18px; padding-left: 3px; letter-spacing: -.1px; }
.e .v s { margin: 0 13px 0 0; color: #777; font-weight: 400; font-size: 23px; }
.row b { width: 5px; height: 20px; margin: 18.500px 26.500px 0 0; background: radial-gradient(circle, #6b6b6b 2.300px, transparent 2.800px) 0 0 / 5px 7.200px; }
.group { height: 54.500px; border-bottom: 1px solid #d8d8d8; display: flex; align-items: center; gap: 18.500px; padding: 5px 0 0 31px; font: 18.500px "Liberation Sans", sans-serif; letter-spacing: 0; color: #444; flex: none; }
.minus { width: 18px; height: 18px; border: 1px solid #e4e4e4; border-radius: 3px; background: linear-gradient(#ccc, #ccc) center / 10px 2px no-repeat; margin-top: 3px; }
.input { height: 58.300px; border-bottom: 0; }
.input .e { padding: 16px 0 0 11.500px; color: #aaa; font-size: 18px; letter-spacing: .2px; }
.scroll { width: 22px; background: #f0f0f0; display: flex; flex-direction: column; justify-content: flex-end; }
.scroll span { height: 148px; background: #c0c0c0; }
.scroll svg { width: 22px; height: 21px; }
.sb { position: absolute; right: 0; top: 0; width: 55px; height: 50px; background: #fff; border-radius: 0 0 0 5px; box-shadow: 0 1px 4px rgba(0,0,0,.3); padding: 12px 0 0 8px; clip-path: inset(0 0 -6px -6px); }
.sb svg { width: 40px; height: 28px; }
.gap { width: 9px; background: #f9f9f9; border-right: 1px solid #d8d8d8; flex: none; }
.view { flex: 1; position: relative; }
.fig { width: 1391px; height: 804px; }
.lb { font: italic 24px "Liberation Serif", serif; }
.lb .sm { font-size: 16px; font-style: normal; }
.sb3 { position: absolute; top: 0; right: 0; width: 408.500px; height: 50px; background: #fff; border-radius: 0 0 0 5px; box-shadow: 0 1px 4px rgba(0,0,0,.3); clip-path: inset(0 0 -6px -6px); display: flex; align-items: center; gap: 4.700px; padding: 0 0 1px 6.500px; }
.sb3 button { width: 38px; height: 38px; border: 1px solid #aaa; border-radius: 6px; }
.sb3 button svg { width: 38px; height: 38px; margin: -1px; }
.kb { margin-left: 15.500px; }
.pyr { margin: 0 0 0 31.500px; }
.zoomb { position: absolute; right: 18px; bottom: 18px; display: flex; flex-direction: column; gap: 9.700px; }
.zoomb button { width: 43px; height: 43px; border: 0; border-radius: 50%; box-shadow: 0 1px 4px rgba(0,0,0,.4); }
.zoomb svg { width: 43px; height: 43px; fill: none; stroke: #666; stroke-width: 2.300; }
.zoomb use { stroke: none; }

/* Windows taskbar */
.task { height: 59px; background: linear-gradient(90deg, #1d1d1d 0, #1e1e1e 80px, #424242 150px, #484848 300px, #484848 1650px, #1c1c1c 1850px, #1a1a1a); display: flex; flex: none; }
.ap { width: 75px; height: 59px; display: flex; align-items: center; justify-content: center; position: relative; flex: none; }
.ap svg { width: 36px; height: 36px; }
.ap:first-child { width: 72px; }
.run { background: linear-gradient(#7ab7ea, #7ab7ea) center bottom / 61px 2.500px no-repeat; }
.act { width: 73px; margin-left: 2px; padding-right: 2px; background: linear-gradient(#7ab7ea, #7ab7ea) bottom / 100% 2.500px no-repeat, linear-gradient(90deg, #6d6d6d 66px, #474747 66px, #474747 68px, #5d5d5d 68px); }
.pr span { width: 33px; height: 32px; background: #00005b; border-radius: 6px; color: #9b99ff; font: bold 18px/30px "Open Sans", sans-serif; text-align: center; margin-bottom: 3px; }
.tray { margin-left: auto; display: flex; align-items: center; color: #fff; }
.tray svg { width: 24px; height: 24px; fill: none; stroke: #fff; stroke-width: 1.300; margin-right: 12.500px; }
.lang { font-size: 17px; letter-spacing: -.4px; width: 33px; margin-left: 4px; }
.clock { width: 104px; margin: 0 18px 0 10px; display: flex; flex-direction: column; text-align: center; font-size: 18px; line-height: 28px; letter-spacing: -.2px; }
.tray .note { width: 24px; height: 26px; margin-right: 30px; margin-top: 3px; }
.tray i { width: 2px; height: 59px; background: #777; margin-right: 5px; }
```
